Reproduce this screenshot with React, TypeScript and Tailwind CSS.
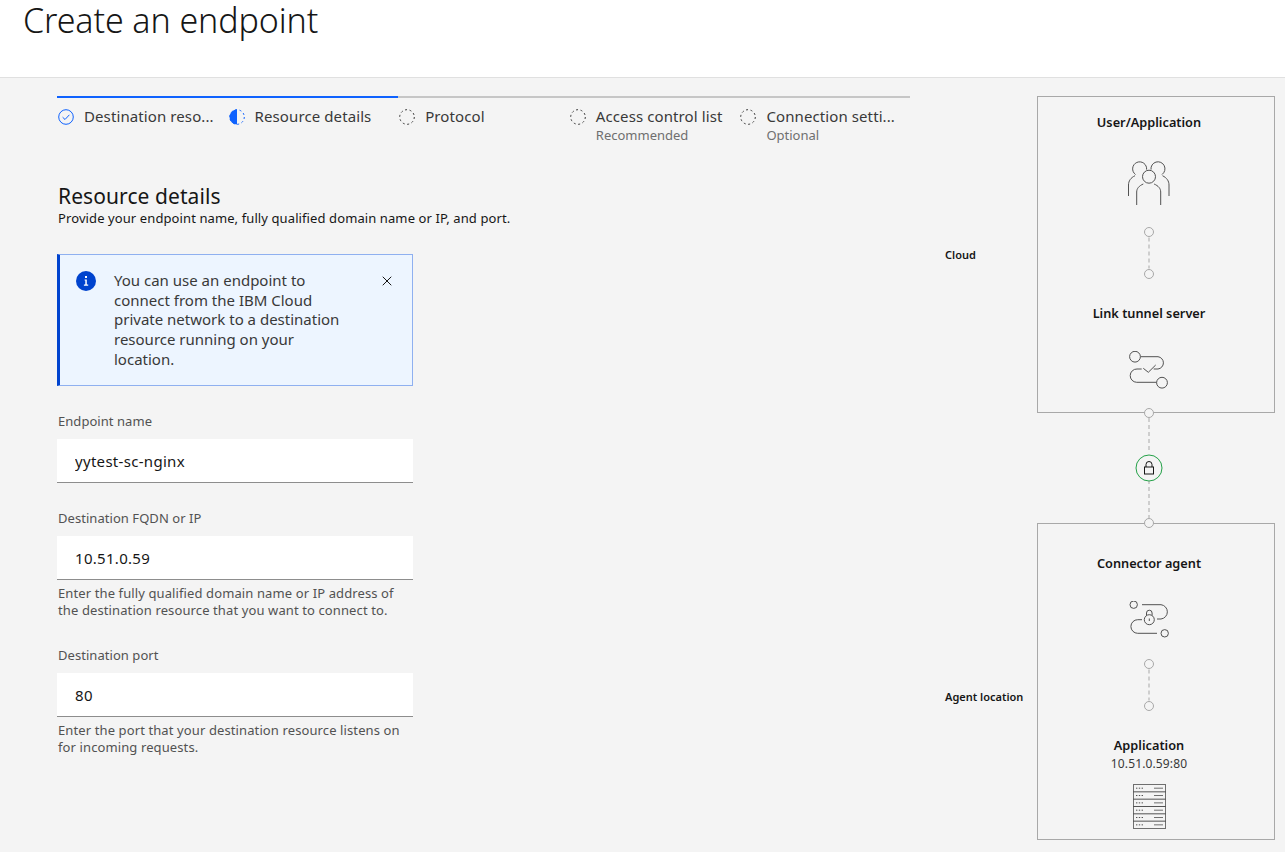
import { X } from "lucide-react";

const steps = [
  { label: "Destination reso...", state: "done" },
  { label: "Resource details", state: "current" },
  { label: "Protocol", state: "todo" },
  { label: "Access control list", state: "todo", note: "Recommended" },
  { label: "Connection setti...", state: "todo", note: "Optional" },
];

const noticeLines = [
  "You can use an endpoint to",
  "connect from the IBM Cloud",
  "private network to a destination",
  "resource running on your",
  "location.",
];

function StepIcon({ state }: { state: string }) {
  if (state === "done") {
    return (
      <svg width="16" height="16" viewBox="0 0 16 16" fill="none" className="shrink-0">
        <circle cx="8" cy="8" r="7.3" stroke="#0f62fe" strokeWidth="1" />
        <path d="M4.6 8.2 7 10.5l4.4-4.7" stroke="#0f62fe" strokeWidth="1" />
      </svg>
    );
  }
  if (state === "current") {
    return (
      <svg width="16" height="16" viewBox="0 0 16 16" fill="none" className="shrink-0">
        <path d="M8 0.5a7.5 7.5 0 0 0 0 15z" fill="#0f62fe" />
        <circle cx="8" cy="8" r="7.3" stroke="#0f62fe" strokeWidth="1" strokeDasharray="2 2.6" />
      </svg>
    );
  }
  return (
    <svg width="16" height="16" viewBox="0 0 16 16" fill="none" className="shrink-0">
      <circle cx="8" cy="8" r="7.3" stroke="#393939" strokeWidth="1" strokeDasharray="2 2.6" />
    </svg>
  );
}

function Field({ label, value, help }: { label: string; value: string; help?: string[] }) {
  return (
    <div className="w-[356px]">
      <label className="block pl-px text-[13px] leading-[17px] tracking-[0.05px] text-[#525252]">{label}</label>
      <input
        readOnly
        value={value}
        className="mt-[9px] block h-[44px] w-full border-b border-[#8d8d8d] bg-white px-[18px] text-[15px] tracking-[0.3px] text-[#161616] outline-none"
      />
      {help ? (
        <p className="mt-[5px] pl-px text-[13px] leading-[17px] tracking-[0.11px] text-[#525252]">
          {help.map((line) => (
            <span key={line} className="block whitespace-nowrap">
              {line}
            </span>
          ))}
        </p>
      ) : null}
    </div>
  );
}

function DotLine() {
  return (
    <svg width="12" height="52" viewBox="0 0 12 52" fill="none" className="block">
      <path d="M6 10.5v31" stroke="#a8a8a8" strokeDasharray="4 3" />
      <circle cx="6" cy="5" r="4.5" stroke="#a8a8a8" />
      <circle cx="6" cy="47" r="4.5" stroke="#a8a8a8" />
    </svg>
  );
}

function PeopleIcon() {
  return (
    <svg width="42" height="45" viewBox="0 0 42 45" fill="none" stroke="#525252" strokeWidth="1" className="block">
      <path d="M7.5 13.5A7 7 0 1 1 18.6 8.6" />
      <path d="M34 13.5A7 7 0 1 0 23 8.6" />
      <circle cx="21" cy="15.7" r="6.5" />
      <path d="M8.7 44V31c0-3.5 2.4-6.2 6.6-8" />
      <path d="M32.7 44V31c0-3.5-2.4-6.2-6.6-8" />
      <path d="M.5 35V24c0-4 2.2-7.2 6.5-9.3" />
      <path d="M41 35V24c0-4-2.2-7.2-6.5-9.3" />
    </svg>
  );
}

function TunnelIcon() {
  return (
    <svg width="40" height="38" viewBox="0 0 40 38" fill="none" stroke="#525252" strokeWidth="1" className="block">
      <circle cx="6" cy="5.7" r="5.4" />
      <circle cx="33" cy="31.7" r="5.4" />
      <path d="M11.7 5.7H29a6.2 6.2 0 0 1 0 12.3h-4.3" />
      <path d="M12.7 18H8a6.6 6.6 0 0 0-.3 13.3h19.8" />
      <path d="M14.3 17.3l5 4 7.4-7.3" />
    </svg>
  );
}

function AgentIcon() {
  return (
    <svg width="40" height="38" viewBox="0 0 40 38" fill="none" stroke="#525252" strokeWidth="1" className="block">
      <circle cx="4.7" cy="3.7" r="3.7" />
      <circle cx="35.7" cy="32.3" r="3.7" />
      <path d="M13 3.7h19a7.2 7.2 0 0 1 0 14.3h-4" />
      <path d="M13 18.7H8.7a6.8 6.8 0 0 0 0 13.6H28" />
      <circle cx="20.3" cy="18.7" r="5" />
      <path d="M17.5 14.5V12a2.8 2.8 0 0 1 5.6 0v2.5" />
      <path d="M20.3 17.5v2.5" />
    </svg>
  );
}

function ServerIcon() {
  const rows = [0, 1, 2, 3, 4, 5];
  return (
    <svg width="33" height="45" viewBox="0 0 33 45" fill="none" className="block">
      <rect x="0.5" y="0.5" width="32" height="44" stroke="#6f6f6f" fill="#f4f4f4" />
      {rows.map((row) => (
        <g key={row}>
          {row > 0 ? <path d={`M0 ${0.5 + row * 7.33}h33`} stroke="#525252" /> : null}
          <path d={`M3 ${4.2 + row * 7.33}h8`} stroke="#525252" strokeDasharray="1.4 1.4" />
          <path d={`M21 ${4.2 + row * 7.33}h9`} stroke="#6f6f6f" />
        </g>
      ))}
    </svg>
  );
}

function NodeTitle({ children }: { children: string }) {
  return <div className="-mt-px pb-px text-[12.75px] font-semibold leading-[16px] text-[#161616]">{children}</div>;
}

export default function App() {
  return (
    <div className="h-[852px] overflow-hidden bg-[#f4f4f4] font-['Noto_Sans',sans-serif] text-[#161616]">
      <header className="h-[78px] border-b border-[#e0e0e0] bg-white pl-[23px]">
        <h1 className="text-[34px] font-light leading-[40px] tracking-[-0.1px]">Create an endpoint</h1>
      </header>

      <div className="flex">
        <main className="ml-[57px] w-[853px] pt-[18px]">
          <div className="flex h-[2px]">
            <div className="w-[341px] bg-[#0f62fe]" />
            <div className="flex-1 bg-[#c6c6c6]" />
          </div>
          <ol className="grid grid-cols-5 pt-[9px]">
            {steps.map((step) => (
              <li key={step.label} className="flex gap-[10px] pl-px">
                <div className="pt-[2px]">
                  <StepIcon state={step.state} />
                </div>
                <div className="-mt-px min-w-0 pb-px">
                  <div className="whitespace-nowrap text-[15px] leading-[20px] tracking-[0.1px] text-[#393939]">
                    {step.label}
                  </div>
                  {step.note ? (
                    <div className="text-[13px] leading-[18px] text-[#6f6f6f]">{step.note}</div>
                  ) : null}
                </div>
              </li>
            ))}
          </ol>

          <h2 className="mt-[37px] pl-px text-[21px] leading-[28px] tracking-[0.08px]">Resource details</h2>
          <p className="-mt-px pl-px text-[13px] leading-[18px] tracking-[0.1px] text-[#161616]">
            Provide your endpoint name, fully qualified domain name or IP, and port.
          </p>

          <div className="mt-[27px] flex h-[132px] w-[356px] border border-l-[3px] border-[#8fb0f0] border-l-[#0043ce] bg-[#edf5ff] pl-[16px] pt-[16px]">
            <svg width="20" height="20" viewBox="0 0 20 20" className="shrink-0">
              <circle cx="10" cy="10" r="10" fill="#0043ce" />
              <path d="M8.6 8.4h2.2v5.2h1.4v1.2H7.9v-1.2h1.4V9.6h-.7zM9 5h2v2H9z" fill="#fff" />
            </svg>
            <p className="ml-[18px] w-[240px] text-[15px] leading-[19.7px] text-[#393939]">
              {noticeLines.map((line) => (
                <span key={line} className="block whitespace-nowrap">
                  {line}
                </span>
              ))}
            </p>
            <X size={16} strokeWidth={1.5} className="ml-[25px] mt-[2px] shrink-0 text-[#161616]" />
          </div>

          <div className="mt-[27px] flex flex-col gap-[27px]">
            <Field label="Endpoint name" value="yytest-sc-nginx" />
            <Field
              label="Destination FQDN or IP"
              value="10.51.0.59"
              help={["Enter the fully qualified domain name or IP address of", "the destination resource that you want to connect to."]}
            />
            <div className="mt-px">
              <Field
                label="Destination port"
                value="80"
                help={["Enter the port that your destination resource listens on", "for incoming requests."]}
              />
            </div>
          </div>
        </main>

        <aside className="ml-[35px] pt-[18px]">
          <div className="flex items-center">
            <div className="w-[92px] pt-[2px] text-[11px] font-semibold">Cloud</div>
            <section className="flex h-[317px] w-[238px] flex-col items-center border border-[#a8a8a8] pr-[14px]">
              <div className="mt-[18px]"><NodeTitle>User/Application</NodeTitle></div>
              <div className="mt-[30px]"><PeopleIcon /></div>
              <div className="mt-[21px]"><DotLine /></div>
              <div className="mt-[27px]"><NodeTitle>Link tunnel server</NodeTitle></div>
              <div className="mt-[29px]"><TunnelIcon /></div>
            </section>
          </div>

          <div className="relative z-10 -my-[6px] ml-[190px] w-[28px]">
            <svg width="28" height="122" viewBox="0 0 28 122" fill="none" className="block">
              <path d="M14 11v34M14 73v38" stroke="#a8a8a8" strokeDasharray="4 3" />
              <circle cx="14" cy="6" r="4.5" fill="#f4f4f4" stroke="#a8a8a8" />
              <circle cx="14" cy="116" r="4.5" fill="#f4f4f4" stroke="#a8a8a8" />
              <circle cx="14" cy="61" r="13" fill="#f4f4f4" stroke="#24a148" />
              <rect x="9.5" y="60" width="9" height="7" stroke="#161616" />
              <path d="M11 60v-2.5a3 3 0 0 1 6 0V60" stroke="#161616" />
            </svg>
          </div>

          <div className="flex items-center">
            <div className="w-[92px] pt-[32px] text-[11px] font-semibold">Agent location</div>
            <section className="flex h-[317px] w-[238px] flex-col items-center border border-[#a8a8a8] pr-[14px]">
              <div className="mt-[32px]"><NodeTitle>Connector agent</NodeTitle></div>
              <div className="mt-[29px]"><AgentIcon /></div>
              <div className="mt-[20px]"><DotLine /></div>
              <div className="mt-[27px]"><NodeTitle>Application</NodeTitle></div>
              <div className="mt-[2px] text-[12px] leading-[16px] tracking-[0.13px] text-[#393939]">10.51.0.59:80</div>
              <div className="mt-[12px]"><ServerIcon /></div>
            </section>
          </div>
        </aside>
      </div>
    </div>
  );
}
